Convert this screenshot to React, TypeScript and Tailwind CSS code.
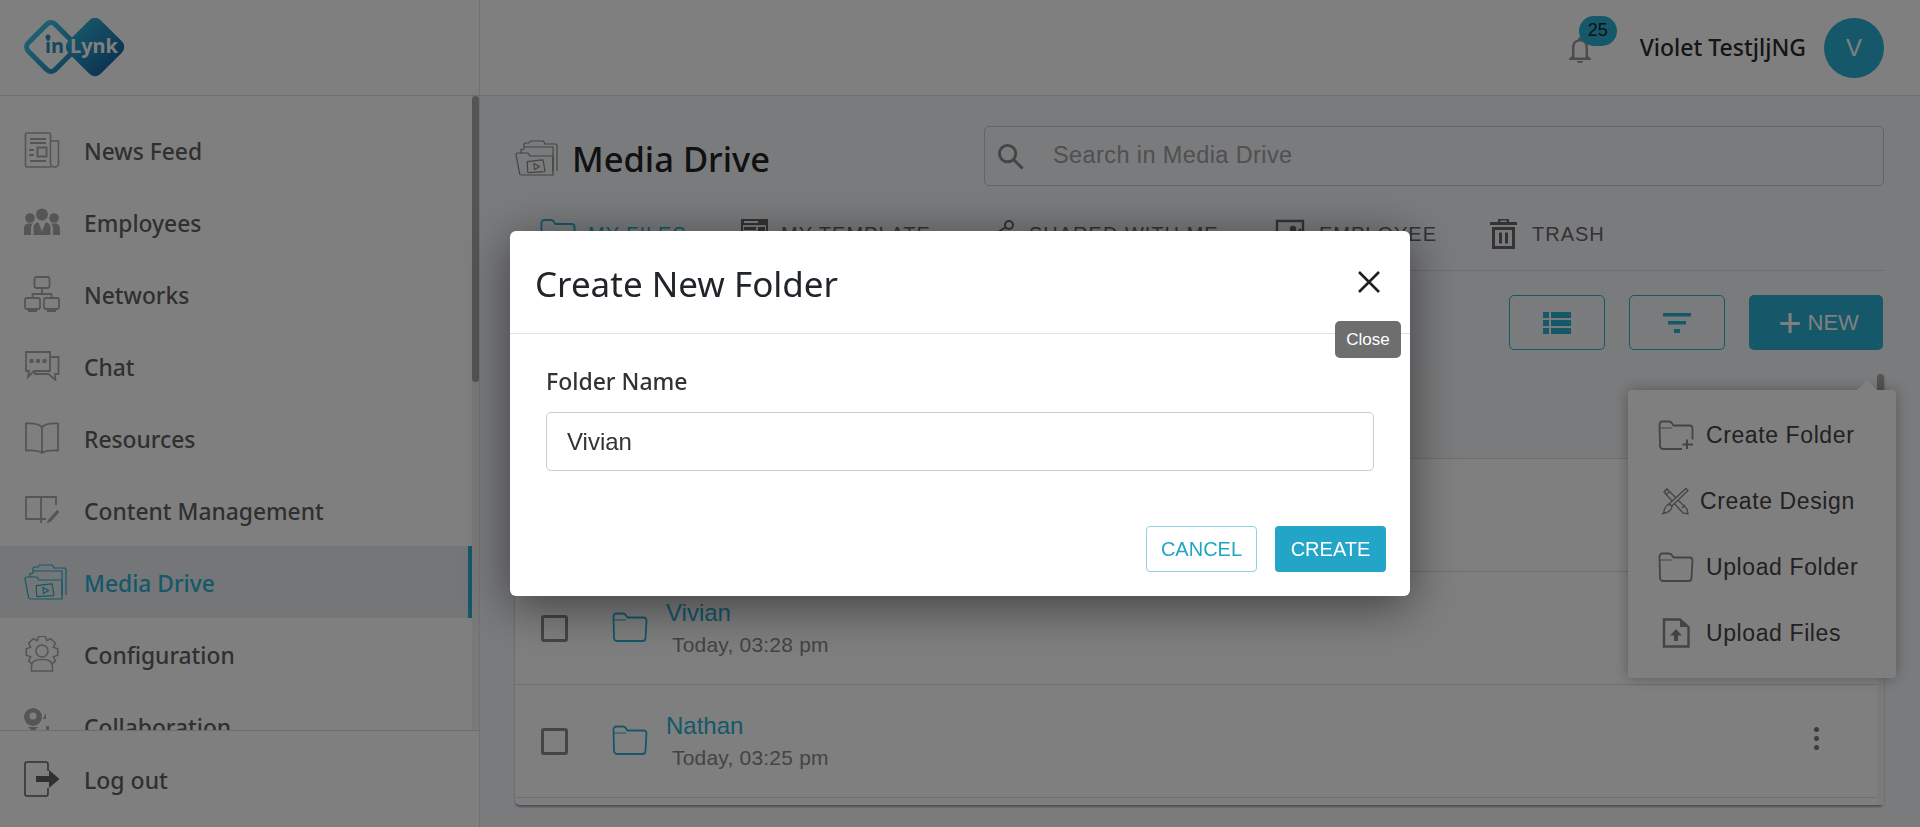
import React from 'react';

const SEGOE = "font-['Noto_Sans',sans-serif]";
const ARIAL = "font-['Liberation_Sans',Arial,sans-serif]";

type IconProps = { className?: string };

// outline of an 8-tooth gear, used by the Configuration icon
const gearPath = (cx: number, cy: number, inner: number, outer: number) => {
  const points: string[] = [];
  for (let i = 0; i < 8; i++) {
    const a = (i * Math.PI) / 4 - Math.PI / 2;
    [[-0.39, inner], [-0.2, outer], [0.2, outer], [0.39, inner]].forEach(([d, r]) => {
      points.push(`${(cx + r * Math.cos(a + d)).toFixed(1)} ${(cy + r * Math.sin(a + d)).toFixed(1)}`);
    });
  }
  return `M${points.join('L')}Z`;
};

const NewsIcon = ({ className }: IconProps) => (
  <svg viewBox="0 0 36 36" fill="none" stroke="currentColor" strokeWidth="1.6" className={className}>
    <path d="M27 35H3a1.5 1.5 0 0 1-1.5-1.5V2.500A1.5 1.5 0 0 1 3 1h22a1.5 1.5 0 0 1 1.5 1.5V31a4 4 0 0 0 4 4h.5a3.500 3.500 0 0 0 3.500-3.500V9h-8" />
    <path d="M6 7h16M6 11h16M5 18h5M5 23h5M6 29h16" strokeWidth="1.800" />
    <rect x="13.500" y="15.500" width="9" height="9" strokeWidth="2" />
  </svg>
);

const EmployeesIcon = ({ className }: IconProps) => (
  <svg viewBox="0 0 36 28" fill="currentColor" className={className}>
    <circle cx="18" cy="6.500" r="6" />
    <circle cx="6" cy="10" r="4.800" />
    <circle cx="30" cy="10" r="4.800" />
    <path d="M0 27v-6c0-4 2-5.500 5-5.500h4c-1.500 1.500-2 3-2 5V27H1a1 1 0 0 1-1 0Z" />
    <path d="M36 27v-6c0-4-2-5.500-5-5.500h-4c1.500 1.500 2 3 2 5V27h6a1 1 0 0 0 1 0Z" />
    <path d="M9.500 27v-7c0-4 2.500-5.500 5-5.500l3.500 9 3.500-9c2.500 0 5 1.500 5 5.500v7Z" />
  </svg>
);

const NetworksIcon = ({ className }: IconProps) => (
  <svg viewBox="0 0 36 36" fill="none" stroke="currentColor" strokeWidth="1.800" className={className}>
    <rect x="10.500" y="1" width="15" height="11" rx="2" />
    <rect x="1" y="22" width="15" height="11" rx="2" />
    <rect x="20" y="22" width="15" height="11" rx="2" />
    <path d="M18 12v6M8.500 22v-4h19v4M4 35h9M23 35h9" />
  </svg>
);

const ChatIcon = ({ className }: IconProps) => (
  <svg viewBox="0 0 36 30" fill="none" stroke="currentColor" strokeWidth="1.800" className={className}>
    <path d="M26 1H2v19h3l-1 6 6-6h16Z" />
    <path d="M26 6h8.500v17H31l.5 6-7-6H11v-3" />
    <circle cx="7.500" cy="10" r="1.300" fill="currentColor" />
    <circle cx="14" cy="10" r="1.300" fill="currentColor" />
    <circle cx="20.500" cy="10" r="1.300" fill="currentColor" />
  </svg>
);

const BookIcon = ({ className }: IconProps) => (
  <svg viewBox="0 0 36 32" fill="none" stroke="currentColor" strokeWidth="1.800" className={className}>
    <path d="M18 5C15 2 9 1 2 1.500v27C9 28 15 28.500 18 31c3-2.500 9-3 16-2.500v-27C27 1 21 2 18 5Z" />
    <path d="M18 5v26" />
  </svg>
);

const ContentIcon = ({ className }: IconProps) => (
  <svg viewBox="0 0 36 28" fill="none" stroke="currentColor" strokeWidth="1.800" className={className}>
    <path d="M17 23H2V1h15m0 0v26M17 1h15v8M17 23h5" />
    <path d="M24 24l9-10 2.500 2-9 10-3.500 1Z" fill="currentColor" stroke="none" />
  </svg>
);

const MediaIcon = ({ className }: IconProps) => (
  <svg viewBox="0 0 44 37" fill="none" stroke="currentColor" strokeWidth="1.200" className={className}>
    <path d="M9 9V4.500A1.500 1.500 0 0 1 10.500 3H14l1.500-2h13L30 4h10.500A1.500 1.500 0 0 1 42 5.500V31" />
    <path d="M6 13V9.500h3M9 7h29v24" />
    <path d="M1 14.500A1.500 1.500 0 0 1 2.500 13H13l2 3h21.500A1.500 1.500 0 0 1 38 17.500V35H6.500a2 2 0 0 1-2-1.800Z" />
    <path d="M12 22l15-2.500a1 1 0 0 1 1 .8l2 9.700a1 1 0 0 1-.8 1.200L14 33a1 1 0 0 1-1-.8Z" transform="rotate(3 20 26)" />
    <path d="M19 23.500l5.500 3-5 3Z" />
  </svg>
);

const GearIcon = ({ className }: IconProps) => (
  <svg viewBox="0 0 36 36" fill="none" stroke="currentColor" strokeWidth="1.600" className={className}>
    <path d={gearPath(18, 16, 12.5, 16)} />
    <path d="M7.500 35v-5c0-4 4-6.500 10.500-6.500S28.500 26 28.500 30v5Z" fill="#ffffff" />
    <circle cx="18" cy="15" r="6" fill="#ffffff" />
  </svg>
);

const CollabIcon = ({ className }: IconProps) => (
  <svg viewBox="0 0 36 36" fill="currentColor" className={className}>
    <circle cx="9" cy="9" r="9" />
    <circle cx="9" cy="8" r="3.500" fill="#ffffff" />
    <path d="M4 19h10l-3 3v6H7v-6Z" />
    <path d="M22 5v13h3v5h4a6 6 0 0 1 6 6v3H16v-3a6 6 0 0 1 6-6V11h-3Z" />
  </svg>
);

const LogoutIcon = ({ className }: IconProps) => (
  <svg viewBox="0 0 36 36" fill="none" className={className}>
    <path d="M24 10V3a2 2 0 0 0-2-2H3a2 2 0 0 0-2 2v30a2 2 0 0 0 2 2h19a2 2 0 0 0 2-2v-6" stroke="currentColor" strokeWidth="1.500" />
    <path d="M12 15h13V9l10.500 9L25 27v-6H12Z" fill="currentColor" />
  </svg>
);

const BellIcon = ({ className }: IconProps) => (
  <svg viewBox="0 0 24 28" fill="none" className={className}>
    <path d="M12 2a2 2 0 0 0-2 2v.6C6 5.500 4 8.500 4 12.500V21l-3 2.500V25h22v-1.500L20 21v-8.500c0-4-2-7-6-7.900V4a2 2 0 0 0-2-2Z" fill="currentColor" />
    <path d="M6.500 22.500v-10c0-4 2-6 5.500-6s5.500 2 5.500 6v10Z" fill="#ffffff" />
    <path d="M9 26h6a3 2 0 0 1-6 0Z" fill="currentColor" />
  </svg>
);

const SearchIcon = ({ className }: IconProps) => (
  <svg viewBox="0 0 28 28" fill="none" stroke="currentColor" strokeWidth="3" className={className}>
    <circle cx="11" cy="11" r="8.500" />
    <path d="M17 17l9.500 9.500" />
  </svg>
);

const FolderIcon = ({ className }: IconProps) => (
  <svg viewBox="0 0 36 30" fill="none" stroke="currentColor" strokeWidth="1.800" className={className}>
    <path d="M1.500 5a3 3 0 0 1 3-3.500H11c1.500 0 2.500.8 3.500 2.500l1 1.500H31.500a3 3 0 0 1 3 3L33.500 26a3 3 0 0 1-3 3H5a3 3 0 0 1-3-3Z" />
    <path d="M2 8h12" strokeWidth="1" />
  </svg>
);

const FolderPlusIcon = ({ className }: IconProps) => (
  <svg viewBox="0 0 36 30" fill="none" stroke="currentColor" strokeWidth="1.800" className={className}>
    <path d="M24 29H5a3 3 0 0 1-3-3L1.500 5a3 3 0 0 1 3-3.500H11c1.500 0 2.500.8 3.500 2.500l1 1.500H31.500a3 3 0 0 1 3 3v11" />
    <path d="M2 8h12" strokeWidth="1" />
    <path d="M29 19.500v9.500M24.500 24.500H35" strokeWidth="2" />
  </svg>
);

const DesignIcon = ({ className }: IconProps) => (
  <svg viewBox="0 0 28 28" fill="none" stroke="currentColor" strokeWidth="1.300" className={className}>
    <path d="M3 5l3-3 20 20 1 5-5-1Z" />
    <path d="M5 8l3-3M21 21l3-3M6 2l-3 3" />
    <path d="M25 1.500l2 2L11 19l-3-2Z" fill="#ffffff" />
    <path d="M8 17l3 2.500c-.5 4-3.500 6-9 7 2-2 .5-7 6-9.500Z" fill="#ffffff" />
  </svg>
);

const FileUpIcon = ({ className }: IconProps) => (
  <svg viewBox="0 0 28 30" fill="none" className={className}>
    <path d="M2 1.500h16L26.500 9v19.500H2Z" stroke="currentColor" strokeWidth="2.400" />
    <path d="M18 1.500V9h8.500Z" fill="currentColor" />
    <path d="M14 11l6 6.500h-4V23h-4v-5.500H8Z" fill="currentColor" />
  </svg>
);

const FilesTabIcon = ({ className }: IconProps) => (
  <svg viewBox="0 0 36 30" fill="none" stroke="currentColor" strokeWidth="1.800" className={className}>
    <path d="M1.500 4a3 3 0 0 1 3-3H11c1.500 0 2.500.8 3.500 2.500L15.500 5H31.500a3 3 0 0 1 3 3v18H1.500Z" />
  </svg>
);

const TemplateIcon = ({ className }: IconProps) => (
  <svg viewBox="0 0 27 30" fill="currentColor" className={className}>
    <path d="M0 0h27v30H0Zm2 6v22h23V6Z" />
    <path d="M3 8h12v3H3ZM3 14h5v5H3ZM10 14h5v5h-5ZM17 8h7v18h-7Z" />
    <rect x="3" y="2" width="14" height="2" fill="#ffffff" />
  </svg>
);

const ShareIcon = ({ className }: IconProps) => (
  <svg viewBox="0 0 30 30" fill="none" stroke="currentColor" strokeWidth="2" className={className}>
    <circle cx="23" cy="6" r="4" />
    <circle cx="6" cy="17" r="4" fill="currentColor" />
    <circle cx="23" cy="27" r="4" fill="currentColor" />
    <path d="M20 8L9 15M9 19l11 6" />
  </svg>
);

const EmployeeTabIcon = ({ className }: IconProps) => (
  <svg viewBox="0 0 30 30" fill="none" stroke="currentColor" strokeWidth="2.400" className={className}>
    <path d="M28 14V2H2v26h16" />
    <circle cx="18" cy="10" r="2" fill="currentColor" />
    <path d="M22 14l4-4" />
  </svg>
);

const TrashIcon = ({ className }: IconProps) => (
  <svg viewBox="0 0 27 30" fill="currentColor" className={className}>
    <path d="M8 0h11v3h8v3H0V3h8Zm2.500 1.500V3h6V1.500Z" />
    <path d="M2 8h23v22H2Zm3 3v16h17V11Z" />
    <path d="M9 13.500h3v11H9ZM15 13.500h3v11h-3Z" />
  </svg>
);

const ListIcon = ({ className }: IconProps) => (
  <svg viewBox="0 0 28 22" fill="currentColor" className={className}>
    <path d="M0 0h6v6H0ZM8 0h20v6H8ZM0 8h6v6H0ZM8 8h20v6H8ZM0 16h6v6H0ZM8 16h20v6H8Z" />
  </svg>
);

const FilterIcon = ({ className }: IconProps) => (
  <svg viewBox="0 0 28 20" fill="currentColor" className={className}>
    <path d="M0 0h28v3.500H0ZM5 8h18v3.500H5ZM11 16h6v4h-6Z" />
  </svg>
);

const Logo = () => (
  <svg viewBox="0 0 104 60" className="h-[60px] w-[104px]">
    <defs>
      <linearGradient id="lynk" x1="0" x2="1">
        <stop offset="0" stopColor="#2ea8d0" />
        <stop offset="1" stopColor="#1a6ca8" />
      </linearGradient>
      <linearGradient id="inl" x1="0" x2="1">
        <stop offset="0" stopColor="#38bfe4" />
        <stop offset="1" stopColor="#2a90c0" />
      </linearGradient>
    </defs>
    <rect x="10" y="10" width="38" height="38" rx="6" transform="rotate(45 29 29)" fill="none" stroke="url(#inl)" strokeWidth="5" />
    <rect x="50" y="6" width="46" height="46" rx="8" transform="rotate(45 73 29)" fill="url(#lynk)" />
    <circle cx="26" cy="19" r="2.500" fill="#2a90c0" />
    <text x="23" y="35" fontFamily="Noto Sans" fontWeight="700" fontSize="20" fill="#2a90c0">in</text>
    <text x="48" y="35" fontFamily="Noto Sans" fontWeight="700" fontSize="20" fill="#ffffff">Lynk</text>
  </svg>
);

const navItems = [
  { label: 'News Feed', Icon: NewsIcon, icon: 'h-[36px] w-[36px]' },
  { label: 'Employees', Icon: EmployeesIcon, icon: 'h-[28px] w-[36px]' },
  { label: 'Networks', Icon: NetworksIcon, icon: 'h-[36px] w-[36px]' },
  { label: 'Chat', Icon: ChatIcon, icon: 'h-[30px] w-[36px]' },
  { label: 'Resources', Icon: BookIcon, icon: 'h-[32px] w-[36px]' },
  { label: 'Content Management', Icon: ContentIcon, icon: 'h-[28px] w-[36px]' },
  { label: 'Media Drive', Icon: MediaIcon, icon: 'h-[37px] w-[44px]', active: true },
  { label: 'Configuration', Icon: GearIcon, icon: 'h-[36px] w-[36px]' },
  { label: 'Collaboration', Icon: CollabIcon, icon: 'h-[36px] w-[36px]' },
];

const tabs = [
  { label: 'MY FILES', Icon: FilesTabIcon, box: 'w-[201px]', icon: 'h-[30px] w-[36px]', text: 'text-[#28b0d2]', gap: 'ml-[12px]' },
  { label: 'MY TEMPLATE', Icon: TemplateIcon, box: 'w-[245px]', icon: 'h-[30px] w-[27px]', text: 'text-[#666666]', gap: 'ml-[13px]' },
  { label: 'SHARED WITH ME', Icon: ShareIcon, box: 'w-[289px]', icon: 'h-[30px] w-[30px]', text: 'text-[#666666]', gap: 'ml-[13px]' },
  { label: 'EMPLOYEE', Icon: EmployeeTabIcon, box: 'w-[215px]', icon: 'h-[30px] w-[30px]', text: 'text-[#666666]', gap: 'ml-[14px]' },
  { label: 'TRASH', Icon: TrashIcon, box: 'w-[120px]', icon: 'h-[30px] w-[27px]', text: 'text-[#666666]', gap: 'ml-[15px]' },
];

const files = [
  { name: 'Vivian', date: 'Today, 03:28 pm' },
  { name: 'Nathan', date: 'Today, 03:25 pm' },
];

const popupItems = [
  { label: 'Create Folder', Icon: FolderPlusIcon, icon: 'h-[30px] w-[36px] ml-[30px]', gap: 'ml-[12px]' },
  { label: 'Create Design', Icon: DesignIcon, icon: 'h-[28px] w-[28px] ml-[33px]', gap: 'ml-[11px]' },
  { label: 'Upload Folder', Icon: FolderIcon, icon: 'h-[30px] w-[36px] ml-[30px]', gap: 'ml-[12px]' },
  { label: 'Upload Files', Icon: FileUpIcon, icon: 'h-[30px] w-[28px] ml-[34px]', gap: 'ml-[16px]' },
];

const Sidebar = () => (
  <aside className="flex h-full w-[480px] shrink-0 flex-col border-r border-[#e2e2e2] bg-white">
    <div className="flex h-[96px] shrink-0 items-center border-b border-[#d8d8d8] pl-[22px]">
      <Logo />
    </div>
    <div className="flex min-h-0 flex-1">
      <nav className="min-h-0 flex-1 overflow-hidden pt-[18px]">
        {navItems.map(({ label, Icon, icon, active }) => (
          <div
            key={label}
            className={`flex h-[72px] items-center pl-[24px] ${active ? 'border-r-4 border-[#28b0d2] bg-[#e9edf1] text-[#28b0d2]' : 'text-[#aaaaaa]'}`}
          >
            <div className="flex w-[36px] shrink-0 items-center">
              <Icon className={`shrink-0 ${icon}`} />
            </div>
            <span className={`ml-[24px] pt-[4px] text-[22.8px] font-medium ${SEGOE} ${active ? 'text-[#28b0d2]' : 'text-[#606060]'}`}>{label}</span>
          </div>
        ))}
      </nav>
      <div className="w-[7px] shrink-0 bg-[#f2f2f2]">
        <div className="h-[286px] rounded-full bg-[#a8a8a8]" />
      </div>
    </div>
    <div className="flex h-[97px] shrink-0 items-center border-t border-[#d8d8d8] pl-[24px] text-[#606060]">
      <LogoutIcon className="h-[36px] w-[36px]" />
      <span className={`ml-[24px] pt-[2px] text-[23px] font-medium ${SEGOE}`}>Log out</span>
    </div>
  </aside>
);

const TopBar = () => (
  <header className="flex h-[96px] shrink-0 items-center justify-end border-b border-[#d8d8d8] bg-white pr-[36px]">
    <div className="relative mr-[48px] mt-[2px] text-[#999999]">
      <BellIcon className="h-[28px] w-[24px]" />
      <span className={`absolute -top-[19px] left-[11px] flex h-[30px] w-[38px] items-center justify-center rounded-full bg-[#28b0d2] text-[18px] text-[#222222] ${ARIAL}`}>25</span>
    </div>
    <span className={`text-[23px] font-medium text-[#2a2a2a] ${SEGOE}`}>Violet TestjljNG</span>
    <div className={`ml-[18px] flex h-[60px] w-[60px] items-center justify-center rounded-full bg-[#28b0d2] text-[24px] text-[#ffffff] ${ARIAL}`}>V</div>
  </header>
);

const FileRow = ({ name, date }: { name: string; date: string }) => (
  <div className="flex h-[113px] items-start border-b border-[#dddddd]">
    <div className="ml-[26px] mt-[43px] h-[27px] w-[27px] rounded-[3px] border-[3px] border-[#8a8a8a]" />
    <FolderIcon className="ml-[44px] mt-[40px] h-[30px] w-[36px] text-[#28b0d2]" />
    <div className="ml-[18px] mt-[25px] flex-1">
      <div className={`text-[24px] leading-[32px] text-[#28b0d2] ${ARIAL}`}>{name}</div>
      <div className={`ml-[6px] text-[21px] leading-[32px] tracking-[0.2px] text-[#888888] ${ARIAL}`}>{date}</div>
    </div>
    <div className="mr-[58px] mt-[42px] flex flex-col gap-[4px]">
      <span className="h-[5px] w-[5px] rounded-full bg-[#777777]" />
      <span className="h-[5px] w-[5px] rounded-full bg-[#777777]" />
      <span className="h-[5px] w-[5px] rounded-full bg-[#777777]" />
    </div>
  </div>
);

const Main = () => (
  <main className="relative flex min-w-0 flex-1 flex-col overflow-hidden">
    <TopBar />
    <div className="min-h-0 flex-1 bg-[#f4f6f9] pl-[35px] pr-[36px] pt-[30px]">
      <div className="flex h-[60px] items-center justify-between">
        <div className="mt-[5px] flex items-center text-[#888888]">
          <MediaIcon className="h-[37px] w-[44px]" />
          <h1 className={`ml-[13px] text-[34.5px] font-medium text-[#222222] ${SEGOE}`}>Media Drive</h1>
        </div>
        <div className="flex h-[60px] w-[900px] items-center rounded-[5px] border border-[#c9c9c9] pl-[12px] text-[#888888]">
          <SearchIcon className="h-[27px] w-[27px]" />
          <span className={`ml-[29px] text-[23.5px] tracking-[0.4px] text-[#a0a0a0] ${ARIAL}`}>Search in Media Drive</span>
        </div>
      </div>

      <div className="flex h-[85px] items-center border-b border-[#dcdcdc] pl-[25px] pt-[12px]">
        {tabs.map(({ label, Icon, box, icon, text, gap }) => (
          <div key={label} className={`flex shrink-0 items-center ${box} ${text}`}>
            <Icon className={`shrink-0 ${icon}`} />
            <span className={`${gap} whitespace-nowrap text-[20px] tracking-[1px] ${ARIAL}`}>{label}</span>
          </div>
        ))}
      </div>

      <div className="mr-[1px] mt-[24px] flex justify-end gap-[24px]">
        <div className="flex h-[55px] w-[96px] items-center justify-center rounded-[5px] border border-[#28b0d2]">
          <ListIcon className="h-[22px] w-[28px] text-[#28b0d2]" />
        </div>
        <div className="flex h-[55px] w-[96px] items-center justify-center rounded-[5px] border border-[#28b0d2]">
          <FilterIcon className="h-[20px] w-[28px] text-[#28b0d2]" />
        </div>
        <div className={`flex h-[55px] w-[134px] items-center justify-center rounded-[5px] bg-[#28b0d2] pl-[5px] text-white ${ARIAL}`}>
          <span className="text-[40px] font-light leading-[34px]">+</span>
          <span className="ml-[6px] text-[22px]">NEW</span>
        </div>
      </div>

      <div className="mt-[24px] flex h-[431px] rounded-b-[5px] bg-white shadow-[0_2px_2px_rgba(0,0,0,0.35)]">
        <div className="min-w-0 flex-1">
          <div className="h-[85px] border-b border-[#dddddd] bg-[#f5f6f8]" />
          <div className="h-[113px] border-b border-[#dddddd]" />
          {files.map(file => (
            <FileRow key={file.name} {...file} />
          ))}
        </div>
        <div className="w-[7px] shrink-0 bg-[#f4f4f4]">
          <div className="h-[22px] rounded-full bg-[#a8a8a8]" />
        </div>
      </div>
    </div>

    <div className="absolute right-[24px] top-[390px] w-[268px] rounded-[4px] bg-white py-[12px] shadow-[0_0_14px_rgba(0,0,0,0.3)]">
      <div className="absolute -top-[10px] right-[19px] h-0 w-0 border-x-[10px] border-b-[10px] border-x-transparent border-b-white" />
      {popupItems.map(({ label, Icon, icon, gap }) => (
        <div key={label} className="flex h-[66px] items-center text-[#888888]">
          <Icon className={`shrink-0 ${icon}`} />
          <span className={`${gap} whitespace-nowrap text-[23px] tracking-[0.6px] text-[#444444] ${ARIAL}`}>{label}</span>
        </div>
      ))}
    </div>
  </main>
);

const CreateFolderModal = () => (
  <div className="fixed inset-0 bg-black/50">
    <div className="absolute left-[510px] top-[231px] w-[900px] rounded-[6px] bg-white shadow-[0_10px_50px_rgba(0,0,0,0.5)]">
      <div className="relative flex h-[103px] items-center justify-between border-b border-[#e2e2e2] pl-[25px] pr-[29px]">
        <h2 className={`pt-[4px] text-[35px] text-[#212529] ${SEGOE}`}>Create New Folder</h2>
        <svg viewBox="0 0 24 24" fill="none" stroke="#1f1f1f" strokeWidth="2.600" className="h-[24px] w-[24px]">
          <path d="M2 2l20 20M22 2L2 22" />
        </svg>
        <div className={`absolute -bottom-[25px] right-[9px] flex h-[37px] w-[66px] items-center justify-center rounded-[5px] bg-[#6e6e6e] text-[17px] text-white ${ARIAL}`}>Close</div>
      </div>
      <div className="px-[36px] pt-[32px]">
        <label className={`block text-[23px] font-medium leading-[30px] text-[#333333] ${SEGOE}`}>Folder Name</label>
        <div className={`mt-[16px] flex h-[59px] items-center rounded-[5px] border border-[#cccccc] pl-[20px] text-[24px] text-[#333333] ${ARIAL}`}>Vivian</div>
      </div>
      <div className={`mt-[55px] flex justify-end gap-[18px] pb-[24px] pr-[24px] text-[20px] ${ARIAL}`}>
        <div className="flex h-[46px] w-[111px] items-center justify-center rounded-[4px] border border-[#8fd2e3] text-[#22a5c6]">CANCEL</div>
        <div className="flex h-[46px] w-[111px] items-center justify-center rounded-[4px] bg-[#22a5c6] text-white">CREATE</div>
      </div>
    </div>
  </div>
);

export default function App() {
  return (
    <div className="flex h-screen w-full overflow-hidden bg-white">
      <Sidebar />
      <Main />
      <CreateFolderModal />
    </div>
  );
}
